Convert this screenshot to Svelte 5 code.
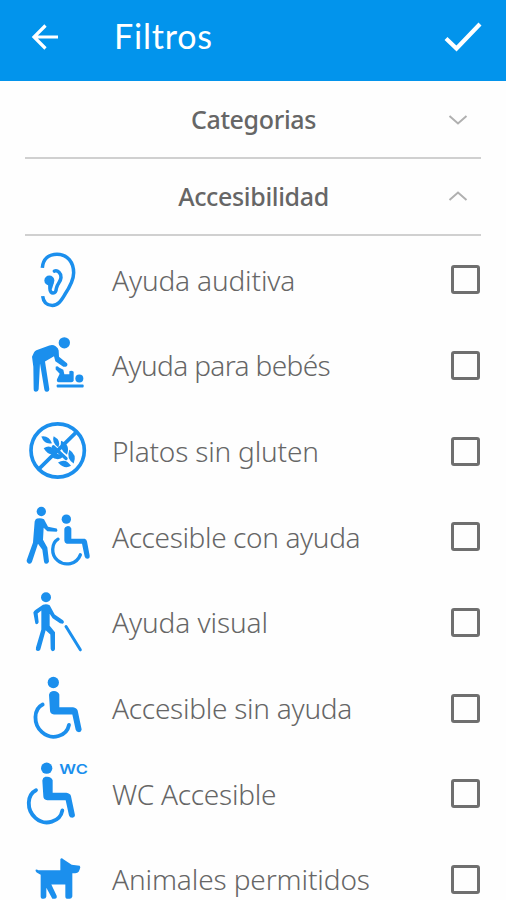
<script lang="ts">
	type Filter = { id: string; label: string; viewBox: string; tracking: number; checked: boolean };

	let categoriesOpen = $state(false);
	let accessibilityOpen = $state(true);

	let filters: Filter[] = $state([
		{ id: 'hearing', label: 'Ayuda auditiva', viewBox: '48 22.5 192 192', tracking: -0.14, checked: false },
		{ id: 'baby', label: 'Ayuda para bebés', viewBox: '48 24.5 192 192', tracking: -0.62, checked: false },
		{ id: 'gluten', label: 'Platos sin gluten', viewBox: '48 26.5 192 192', tracking: -0.18, checked: false },
		{ id: 'assisted', label: 'Accesible con ayuda', viewBox: '48 22.5 192 192', tracking: -0.37, checked: false },
		{ id: 'visual', label: 'Ayuda visual', viewBox: '48 24.5 192 192', tracking: -0.08, checked: false },
		{ id: 'wheelchair', label: 'Accesible sin ayuda', viewBox: '48 23.5 192 192', tracking: -0.26, checked: false },
		{ id: 'wc', label: 'WC Accesible', viewBox: '48 34.5 192 192', tracking: -0.25, checked: false },
		{ id: 'pets', label: 'Animales permitidos', viewBox: '48 51.5 192 192', tracking: -0.11, checked: false }
	]);
</script>

{#snippet chevron(open: boolean)}
	<svg class="chevron" class:open viewBox="0 0 20 12" aria-hidden="true">
		<path d="M1.5 2 L10 9.5 L18.5 2" />
	</svg>
{/snippet}

<div class="screen">
	<header class="bar">
		<button class="back" aria-label="Volver">
			<svg viewBox="0 0 28 28" aria-hidden="true">
				<path d="M27 14 H3 M14.5 2.5 L3 14 L14.5 25.5" />
			</svg>
		</button>
		<h1>Filtros</h1>
		<button class="apply" aria-label="Aplicar">
			<svg viewBox="0 0 38 30" aria-hidden="true">
				<path d="M2 16.5 L12.5 26.5 L36 2" />
			</svg>
		</button>
	</header>

	<main>
		<button class="section" onclick={() => (categoriesOpen = !categoriesOpen)}>
			<span>Categorias</span>
			{@render chevron(categoriesOpen)}
		</button>
		<button class="section" onclick={() => (accessibilityOpen = !accessibilityOpen)}>
			<span>Accesibilidad</span>
			{@render chevron(accessibilityOpen)}
		</button>

		{#if accessibilityOpen}
			<ul>
				{#each filters as filter (filter.id)}
					<li>
						<label>
							<svg class="icon" viewBox={filter.viewBox} aria-hidden="true">
								{#if filter.id === 'hearing'}
									<g class="line" stroke-width="10.5">
										<path class="butt" d="M97 82 C99 55 117 41 141 41 C173 41 191 66 191 97 C191 122 176 145 164 163 C153 181 145 195 127 195 C110 195 100 184 98 167" />
										<path d="M133 92 C143 88 154 99 153 111 C152 126 141 128 139 144 C138 162 120 161 120 146 V130" />
									</g>
									<circle cx="118" cy="120" r="15" />
									<path d="M115 126 H132 L126 145 H116 Z" />
								{:else if filter.id === 'baby'}
									<circle cx="163" cy="54" r="17" />
									<path d="M72 83 Q74 79 79 76 L118 62 Q128 58 137 64 Q145 69 146 77 L147 96 L171 115 Q175 122 167 126 L160 126 L136 109 L132 94 L105 110 L118 193 Q117 202 111 201 Q104 202 103 194 L90 116 L86 193 Q84 202 77 201 Q70 200 71 193 L70 126 L66 96 Z" />
									<path d="M137 126 Q142 122 147 128 L160 135 L163 148 H178 V139 Q185 135 191 141 V168 Q190 172 184 172 H146 Q139 171 141 163 L149 147 L137 134 Z" />
									<circle cx="208" cy="161" r="12" />
									<rect x="140" y="179" width="81" height="9" rx="3" />
								{:else if filter.id === 'gluten'}
									<circle class="line" cx="143" cy="121" r="80" stroke-width="11" />
									<path class="line" stroke-width="11" d="M87 176 L199 66" />
									<path d="M94 79 Q116 75 126 99 Q103 104 94 79 Z" />
									<path d="M131 78 Q155 91 145 112 Q124 97 131 78 Z" />
									<path d="M101 114 Q124 100 140 128 Q119 142 101 114 Z" />
									<path d="M153 92 Q182 103 171 134 Q148 121 153 92 Z" />
									<path d="M122 139 Q139 122 160 139 Q146 155 122 139 Z" />
									<path d="M178 119 Q202 134 191 160 Q168 146 178 119 Z" />
									<path d="M144 157 Q167 142 183 167 Q164 179 144 157 Z" />
									<path class="line" stroke-width="10" d="M130 110 L168 145" />
								{:else if filter.id === 'assisted'}
									<circle cx="94" cy="42" r="14" />
									<path d="M81 63 Q92 60 102 65 L114 88 L140 93 Q145 98 140 103 L112 101 L101 91 L99 127 L112 150 L117 192 Q114 200 108 199 Q103 199 102 192 L97 157 L84 139 L66 193 Q63 201 55 198 Q49 195 50 188 L69 135 L74 72 Q76 65 81 63 Z" />
									<circle cx="169" cy="65" r="14" />
									<path d="M171 86 Q180 84 184 93 V124 H224 Q230 126 231 132 L239 174 Q240 184 232 184 Q226 184 224 177 L216 139 H170 Q163 136 163 129 V94 Q164 88 171 86 Z" />
									<path class="line" stroke-width="10" d="M144 125 C124 137 122 172 143 189 C165 207 200 201 211 172" />
								{:else if filter.id === 'visual'}
									<circle cx="108" cy="46" r="15" />
									<path d="M99 69 Q109 65 119 70 L134 98 L159 115 Q165 121 158 126 L150 124 L128 109 L119 96 V132 L135 151 V202 Q133 208 128 208 Q122 207 122 201 L121 158 L107 145 L91 203 Q87 209 81 207 Q76 204 78 197 L94 143 V86 L83 95 L86 121 Q82 131 76 125 L70 92 Q72 87 77 84 Z" />
									<path class="line" stroke-width="9" d="M168 134 L211 204" />
								{:else if filter.id === 'pets'}
									<path d="M77 120 Q80 117 85 121 L151 121 V88 Q154 83 160 88 L185 105 L209 108 Q213 111 209 119 L206 126 Q203 130 196 130 H187 V200 Q185 207 179 207 H170 Q166 205 166 200 V164 H124 L140 198 Q142 207 134 207 H127 L109 174 V200 Q108 207 101 207 H96 Q92 206 92 200 V135 L80 128 Q75 124 77 120 Z" />
								{:else}
									<!-- the WC icon is the same figure, moved aside for its caption -->
									<g transform={filter.id === 'wc' ? 'translate(-20 10)' : undefined}>
										<circle cx="130" cy="43" r="17" />
										<path d="M126 69 Q143 66 148 79 V117 H189 Q201 119 203 127 L215 184 Q214 192 207 192 Q199 192 197 185 L187 139 H132 Q120 137 120 127 L117 80 Q118 71 126 69 Z" />
										<path class="line" stroke-width="11.5" d="M98 109 C70 123 69 168 96 192 C126 219 171 203 177 170" />
									</g>
									{#if filter.id === 'wc'}
										<text x="148" y="69" textLength="86" lengthAdjust="spacingAndGlyphs">WC</text>
									{/if}
								{/if}
							</svg>
							<span class="name" style="letter-spacing: {filter.tracking}px">{filter.label}</span>
							<input type="checkbox" bind:checked={filter.checked} />
						</label>
					</li>
				{/each}
			</ul>
		{/if}
	</main>
</div>

<style>
	:global(body) {
		background: #fefefe;
	}

	.screen {
		height: 900px;
		overflow: hidden;
		font-family: 'Noto Sans', 'Open Sans', sans-serif;
		color: #666;
	}

	button {
		padding: 0;
		border: 0;
		background: none;
		font: inherit;
		color: inherit;
	}

	.bar {
		display: flex;
		align-items: center;
		box-sizing: border-box;
		height: 81px;
		padding: 0 24px 7px 31px;
		background: #0294ec;
		color: #fff;
	}

	.bar svg {
		display: block;
		fill: none;
		stroke: currentColor;
	}

	.back svg {
		width: 28px;
		height: 28px;
		stroke-width: 3.2;
	}

	.apply svg {
		width: 38px;
		height: 30px;
		stroke-width: 4.2;
	}

	h1 {
		flex: 1;
		margin: 0 0 2px 55px;
		font: 400 34px/40px Lato, sans-serif;
		letter-spacing: 0.8px;
	}

	main {
		padding: 0 25px;
	}

	.section {
		display: flex;
		align-items: center;
		box-sizing: border-box;
		width: 100%;
		height: 77.5px;
		padding-right: 13px;
		border-bottom: 2px solid #d0d0d0;
		font-size: 25px;
		font-weight: 500;
		font-stretch: 87%;
		letter-spacing: -0.35px;
	}

	.section span {
		flex: 1;
		padding-left: 34px;
		text-align: center;
	}

	.chevron {
		width: 20px;
		height: 12px;
		margin-top: 3px;
		fill: none;
		stroke: #b0b0b0;
		stroke-width: 2;
	}

	.chevron.open {
		margin-top: 0;
		transform: scaleY(-1);
	}

	ul {
		margin: 1px 0 0;
		padding: 0;
		list-style: none;
	}

	label {
		display: flex;
		align-items: center;
		height: 85.67px;
	}

	.icon {
		flex-shrink: 0;
		width: 64px;
		height: 64px;
		margin: 0 22px 0 1px;
		overflow: visible;
		fill: #1b8fed;
	}

	.icon .line {
		fill: none;
		stroke: #1b8fed;
		stroke-linecap: round;
	}

	.icon .butt {
		stroke-linecap: butt;
	}

	.icon text {
		font: 600 41px Inter, sans-serif;
	}

	.name {
		flex: 1;
		font-size: 28px;
		font-weight: 300;
		font-stretch: 87%;
		white-space: nowrap;
	}

	input {
		appearance: none;
		box-sizing: border-box;
		width: 29px;
		height: 29px;
		margin: 0 1px 0 0;
		border: 3px solid #6f6f6f;
		border-radius: 3px;
	}

	input:checked {
		background: #0294ec;
	}
</style>
